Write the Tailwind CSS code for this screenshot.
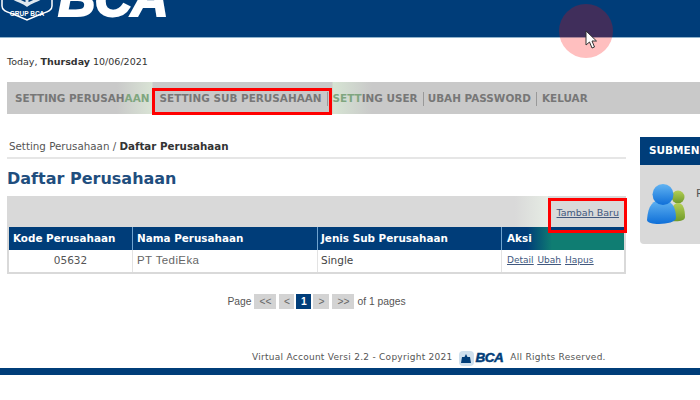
<!DOCTYPE html>
<html>
<head>
<meta charset="utf-8">
<script src="https://cdn.jsdelivr.net/npm/@tailwindcss/browser@4"></script>
</head>
<body class="relative h-[400px] w-[700px] overflow-hidden bg-white font-['DejaVu_Sans',sans-serif] text-[#444]">
  <header class="flex h-[38px] items-start overflow-hidden border-b border-[#8fb3cc] bg-[#003d79] pl-[1px]">
    <svg class="mt-[-14px] h-[35px] w-[52px] shrink-0" viewBox="0 0 52 35" fill="none" stroke="#fff" stroke-width="1.5">
      <path d="M1 0v20c0 5 5 6 11 8l14 6 14-6c6-2 11-3 11-8V0" />
      <path d="M26 0v19M8 6c3 9 12 8 18 13 6-5 15-4 18-13" stroke-width="3" stroke="#dfe8ef"/>
      <text x="26" y="29.500" text-anchor="middle" font-size="6.500" font-weight="700" fill="#fff" stroke="none" font-family="Liberation Sans">GRUP BCA</text>
    </svg>
    <span class="mt-[-22px] ml-[5px] text-[52px] leading-[40px] font-bold tracking-[-1px] text-white italic [-webkit-text-stroke:2px_white] font-['Liberation_Sans']">BCA</span>
  </header>

  <p class="mt-[18px] ml-[7px] text-[9.500px] leading-[12px] text-[#333]">Today, <b>Thursday</b> 10/06/2021</p>

  <nav class="mt-[14px] ml-[7px] flex h-[32px] w-[693px] items-center bg-[linear-gradient(90deg,#c9c9c9_110px,#d9e3d5_145px,#c9c9c9_146px,#c9c9c9_325px,#d6e4d3_326px,#c9c9c9_365px)] pt-[2px] text-[10.450px] font-bold text-[#777]">
    <span class="ml-[8px] whitespace-nowrap">SETTING PERUSAH<span class="text-[#7fa67f]">AAN</span></span>
    <span class="ml-[5px] h-[14px] w-px bg-[#999]"></span>
    <span class="ml-[4px] whitespace-nowrap">SETTING SUB PERUSAHAAN</span>
    <span class="ml-[5px] h-[14px] w-px bg-[#999]"></span>
    <span class="ml-[5px] whitespace-nowrap"><span class="text-[#7fa67f]">SETT</span>ING USER</span>
    <span class="ml-[5px] h-[14px] w-px bg-[#999]"></span>
    <span class="ml-[4px] whitespace-nowrap">UBAH PASSWORD</span>
    <span class="ml-[5px] h-[14px] w-px bg-[#999]"></span>
    <span class="ml-[5px] whitespace-nowrap">KELUAR</span>
  </nav>

  <main class="mt-[25px] flex items-start">
    <section class="ml-[7px] w-[619px] shrink-0">
      <div class="border-b-2 border-[#e6e6e6] pb-[4px] pl-[2px] text-[10.300px] leading-[14px] text-[#555]">Setting Perusahaan / <b class="text-[#333]">Daftar Perusahaan</b></div>
      <h1 class="mt-[9px] text-[16px] leading-[22px] font-bold text-[#1f4e7e]">Daftar Perusahaan</h1>
      <div class="mt-[6px] flex h-[31px] items-center justify-end bg-[linear-gradient(90deg,#d9d9d9_508px,#e6ece4_541px,#d9d9d9_541px)] pt-[4px] pr-[7px] text-[9.500px]">
        <a class="text-[#41587e] underline">Tambah Baru</a>
      </div>
      <div class="border-x-2 border-b-2 border-[#d9d9d9]">
        <div class="grid h-[23px] grid-cols-[123px_185px_184px_1fr] items-center bg-[linear-gradient(90deg,#003d79_518px,#0f7d72_543px)] text-[10.400px] font-bold text-white">
          <div class="flex h-full items-center pl-[4px]">Kode Perusahaan</div>
          <div class="flex h-full items-center border-l border-[#6fa3cf] pl-[4px]">Nama Perusahaan</div>
          <div class="flex h-full items-center border-l border-[#6fa3cf] pl-[3px]">Jenis Sub Perusahaan</div>
          <div class="flex h-full items-center border-l border-[#6fa3cf] pl-[5px]">Aksi</div>
        </div>
        <div class="grid h-[22px] grid-cols-[123px_185px_184px_1fr] items-center text-[10.500px] text-[#555]">
          <div class="text-center">05632</div>
          <div class="flex h-full items-center border-l border-[#e3e3e3] pl-[4px] font-['Liberation_Sans'] text-[11.500px] tracking-[0.4px] text-[#666]">PT TediEka</div>
          <div class="flex h-full items-center border-l border-[#e3e3e3] pl-[3px] text-[#444]">Single</div>
          <div class="flex h-full items-center gap-[4px] border-l border-[#e3e3e3] pl-[5px] text-[9px] text-[#41587e] underline">
            <a>Detail</a><a>Ubah</a><a>Hapus</a>
          </div>
        </div>
      </div>
      <div class="mt-[20px] flex h-[15px] items-center justify-center font-['Liberation_Sans'] text-[10.300px] text-[#555]">
        <span class="mr-[3px]">Page</span>
        <span class="mr-[3px] flex h-[15px] w-[22px] items-center justify-center bg-[#d3d3d3] text-[#666]">&lt;&lt;</span>
        <span class="mr-[2px] flex h-[15px] w-[15px] items-center justify-center bg-[#d3d3d3] text-[#666]">&lt;</span>
        <span class="mr-[2px] flex h-[15px] w-[15px] items-center justify-center bg-[#003d79] font-bold text-white">1</span>
        <span class="mr-[3px] flex h-[15px] w-[16px] items-center justify-center bg-[#d3d3d3] text-[#666]">&gt;</span>
        <span class="mr-[3px] flex h-[15px] w-[22px] items-center justify-center bg-[#d3d3d3] text-[#666]">&gt;&gt;</span>
        <span>of 1 pages</span>
      </div>
      <div class="mt-[41px] flex h-[16px] items-center whitespace-nowrap pl-[245px] text-[9px] tracking-[0.27px] text-[#555]">
        <span>Virtual Account Versi 2.2 - Copyright 2021</span>
        <span class="mr-[7px] ml-[6px] flex h-[15px] items-center gap-[2px]">
          <span class="flex h-[15px] w-[15px] items-center justify-center rounded-[4px] bg-[#cfe0ee]"><svg class="h-[9px] w-[10px]" viewBox="0 0 10 9"><path d="M5 0l1.500 3H9l1 6H0l1-6h2.500z" fill="#003d79"/></svg></span>
          <span class="text-[13.500px] font-bold tracking-[-0.5px] text-[#003d79] italic [-webkit-text-stroke:0.5px_#003d79] font-['Liberation_Sans']">BCA</span>
        </span>
        <span>All Rights Reserved.</span>
      </div>
    </section>
    <aside class="mt-[-2px] ml-[14px] h-[107px] w-[60px] shrink-0 overflow-hidden rounded-bl-[4px] bg-[#d9d9d9]">
      <div class="flex h-[28px] items-center whitespace-nowrap bg-[#003d79] pl-[9px] text-[10.500px] font-bold text-white">SUBMENU</div>
      <div class="relative flex items-start pt-[19px] pl-[7px]">
        <svg class="h-[41px] w-[39px]" viewBox="0 0 39 41">
          <defs>
            <linearGradient id="blue" x1="0" y1="0" x2="0" y2="1"><stop offset="0" stop-color="#62b4f2"/><stop offset="1" stop-color="#0f6fd8"/></linearGradient>
            <linearGradient id="green" x1="0" y1="0" x2="0" y2="1"><stop offset="0" stop-color="#b4cf55"/><stop offset="1" stop-color="#6f9a2a"/></linearGradient>
          </defs>
          <circle cx="31" cy="13" r="6.500" fill="url(#green)"/>
          <path d="M24 37c-1-11 2-18 7-18s7 6 7 14c0 4-7 5-14 4z" fill="url(#green)"/>
          <path d="M0 36c1-15 6-20 15-20s14 6 14 18c0 7-29 8-29 2z" fill="url(#blue)"/>
          <circle cx="16" cy="10.500" r="10.500" fill="url(#blue)"/>
        </svg>
        <span class="absolute top-[21px] left-[56px] text-[11px] text-[#555]">R</span>
      </div>
    </aside>
  </main>

  <div class="absolute top-[88px] left-[152px] h-[27px] w-[180px] border-[3px] border-[#f00]"></div>
  <div class="absolute top-[198px] left-[548px] h-[35px] w-[79px] border-[3px] border-[#f00]">
    <div class="absolute right-0 bottom-0 left-0 h-[3px] bg-[#003d79]"></div>
  </div>
  <div class="absolute top-[4px] left-[559px] h-[54px] w-[54px] rounded-full bg-[#f00]/25"></div>
  <svg class="absolute top-[30px] left-[585px] h-[19px] w-[13px]" viewBox="0 0 13 19"><path d="M1 1v14l3.500-3 2.500 6 2.500-1-2.500-6h4.500z" fill="#fff" stroke="#333" stroke-width="1"/></svg>
  <div class="absolute top-[368px] left-0 h-[7px] w-full bg-[#003d79]"></div>
</body>
</html>
